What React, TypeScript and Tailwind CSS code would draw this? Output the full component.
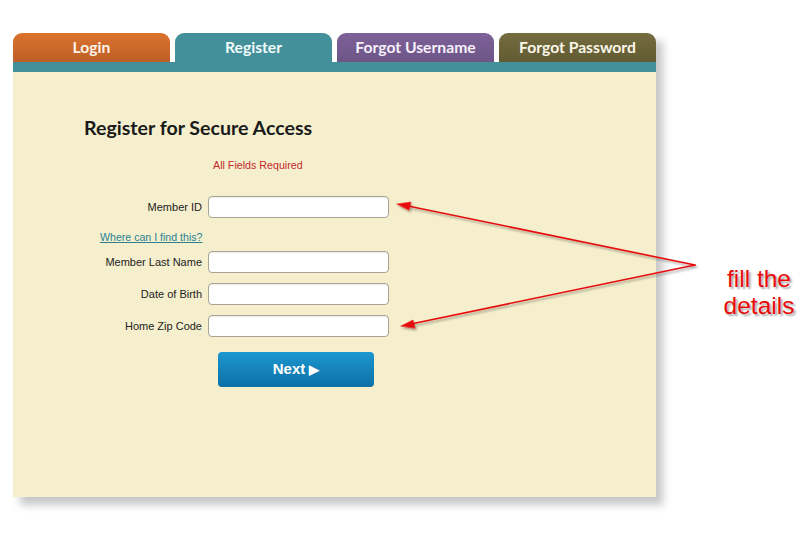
import React from "react";

const tabs = [
  { label: "Login", cls: "bg-gradient-to-b from-[#dc722d] to-[#bd5f28] text-[#fdf3e6]" },
  { label: "Register", cls: "bg-[#44909a] text-[#f0fbfb]" },
  { label: "Forgot Username", cls: "bg-gradient-to-b from-[#7d6197] to-[#6d5587] text-[#f6f0fa]" },
  { label: "Forgot Password", cls: "bg-gradient-to-b from-[#756d40] to-[#625a31] text-[#fbf8ea]" },
];

const Field = ({ label, className = "" }: { label: string; className?: string }) => (
  <div className={`flex items-center ${className}`}>
    <label className="w-[190px] pr-[1px] text-right text-[11px] text-[#222]">{label}</label>
    <input
      type="text"
      className="ml-[5px] h-[22px] w-[181px] rounded-[4px] border border-[#a9a391] bg-white shadow-[inset_0_1px_1px_rgba(0,0,0,0.08)] outline-none"
    />
  </div>
);

export default function App() {
  return (
    <div className="relative h-[533px] w-[810px] overflow-hidden bg-white font-['Liberation_Sans',Arial,sans-serif]">
      <div className="pl-[13px] pt-[33px]">
        <div className="w-[643px] shadow-[7px_8px_8px_rgba(0,0,0,0.22)]">
          <div className="flex gap-[5px]">
            {tabs.map((t) => (
              <div
                key={t.label}
                className={`flex h-[29px] w-[157px] items-center justify-center rounded-t-[9px] font-['Lato',sans-serif] text-[15.7px] font-bold ${t.cls}`}
              >
                {t.label}
              </div>
            ))}
          </div>
          <div className="h-[10px] bg-[#44909a]" />
          <div className="h-[425px] bg-[#f5efcd] pt-[43px]">
            <h1 className="pl-[71px] font-['Lato',sans-serif] text-[19.6px] font-bold leading-[26px] text-[#1a1a1a]">
              Register for Secure Access
            </h1>
            <p className="mt-[17px] pl-[200px] text-[10.7px] leading-[14px] text-[#c4292c]">All Fields Required</p>
            <Field label="Member ID" className="mt-[24px]" />
            <a href="#" className="mt-[12px] ml-[87px] block w-fit text-[10.6px] leading-[14px] text-[#2a7f94] underline">
              Where can I find this?
            </a>
            <div className="mt-[7px] flex flex-col gap-[10px]">
              <Field label="Member Last Name" />
              <Field label="Date of Birth" />
              <Field label="Home Zip Code" />
            </div>
            <button className="mt-[15px] ml-[205px] flex h-[35px] w-[156px] items-center justify-center gap-[4px] rounded-[4px] bg-gradient-to-b from-[#1d97cf] to-[#0c70a6] text-[15px] font-bold text-white">
              Next <span className="text-[13px]">▶</span>
            </button>
          </div>
        </div>
      </div>

      <svg className="pointer-events-none absolute left-0 top-0" width="810" height="533">
        <defs>
          <filter id="sh" x="-10%" y="-10%" width="120%" height="120%">
            <feDropShadow dx="1.5" dy="2" stdDeviation="1.2" floodColor="#000" floodOpacity="0.35" />
          </filter>
        </defs>
        <g filter="url(#sh)" fill="#e50d0d" stroke="#e50d0d" strokeWidth="1.6" strokeLinecap="round">
          <line x1="695" y1="265" x2="408" y2="206" />
          <line x1="695" y1="265" x2="411" y2="324" />
          <polygon points="397,204 411,202 409,210" strokeWidth="0.5" />
          <polygon points="401,326 413,320 415,328" strokeWidth="0.5" />
        </g>
      </svg>

      <div className="absolute left-[714px] top-[265px] w-[90px] text-center text-[24.5px] leading-[27px] text-[#ea0a0a] [text-shadow:2px_2px_2px_rgba(0,0,0,0.35)]">
        fill the
        <br />
        details
      </div>
    </div>
  );
}
